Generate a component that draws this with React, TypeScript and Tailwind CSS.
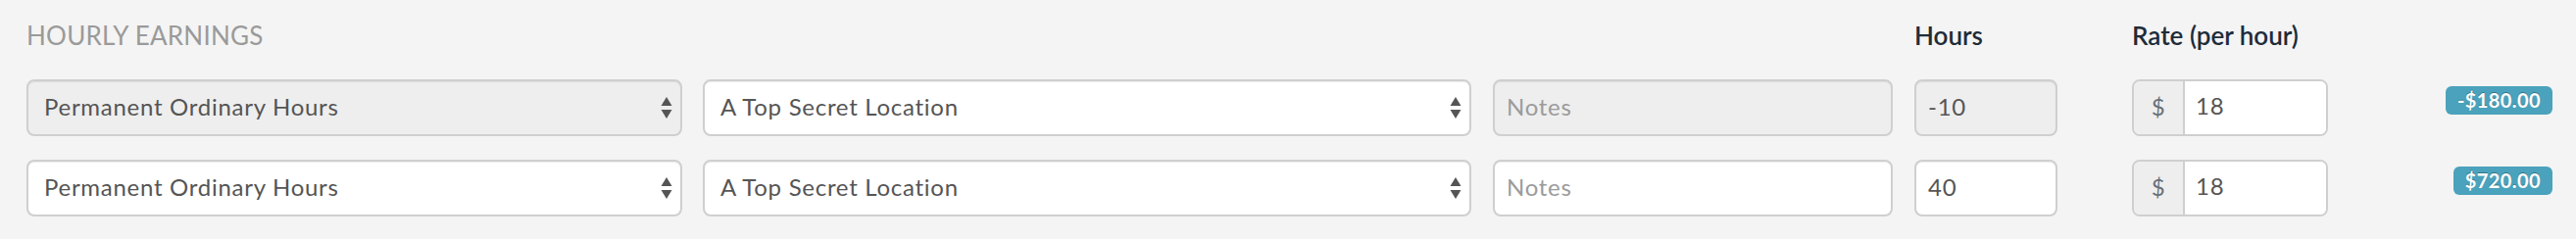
import React from "react";

interface EarningRow {
  type: string;
  location: string;
  hours: string;
  rate: string;
  total: string;
  locked: boolean;
}

const rows: EarningRow[] = [
  { type: "Permanent Ordinary Hours", location: "A Top Secret Location", hours: "-10", rate: "18", total: "-$180.00", locked: true },
  { type: "Permanent Ordinary Hours", location: "A Top Secret Location", hours: "40", rate: "18", total: "$720.00", locked: false },
];

const field =
  "h-[58px] rounded-[8px] border-2 border-[#cfcfcf] shadow-[inset_0_1px_1px_rgba(0,0,0,0.075)] text-[24px] tracking-[0.03em] text-[#555555] outline-none";

function SortArrows() {
  return (
    <svg width="12" height="24" viewBox="0 0 12 24" aria-hidden="true" className="shrink-0">
      <path d="M6 1 L11.5 10 L0.5 10 Z" fill="#555555" />
      <path d="M6 23 L11.5 14 L0.5 14 Z" fill="#555555" />
    </svg>
  );
}

function FakeSelect({ value, locked, className }: { value: string; locked: boolean; className: string }) {
  return (
    <div
      className={`${field} ${className} flex items-center justify-between pl-[16px] pr-[8px] ${
        locked ? "bg-[#eeeeee]" : "bg-white"
      }`}
    >
      <span className="pb-[3px]">{value}</span>
      <SortArrows />
    </div>
  );
}

export default function App() {
  return (
    <div
      className="min-h-[244px] w-[2628px] bg-[#f4f4f4] pl-[27px] pr-[24px] pt-[23px]"
      style={{ fontFamily: "Lato, 'Open Sans', sans-serif" }}
    >
      {/* Kopfzeile */}
      <div className="mb-[32px] flex h-[26px] items-center text-[26px] leading-[26px]">
        <div className="w-[1926px] uppercase tracking-[0.01em] text-[#9a9a9a]">Hourly Earnings</div>
        <div className="w-[146px] font-semibold text-[#1e2c3a]">Hours</div>
        <div className="ml-[76px] font-semibold text-[#1e2c3a]">Rate (per hour)</div>
      </div>

      <div className="flex flex-col gap-[24px]">
        {rows.map((row, i) => (
          <div key={i} className="flex items-start">
            <FakeSelect value={row.type} locked={row.locked} className="w-[669px]" />
            <FakeSelect value={row.location} locked={false} className="ml-[21px] w-[784px]" />
            <input
              placeholder="Notes"
              readOnly
              className={`${field} ml-[22px] w-[408px] px-[12px] pb-[4px] placeholder:text-[#9b9b9b] ${
                row.locked ? "bg-[#eeeeee]" : "bg-white"
              }`}
            />
            <input
              defaultValue={row.hours}
              readOnly
              className={`${field} ml-[22px] w-[146px] px-[12px] pb-[4px] ${row.locked ? "bg-[#eeeeee]" : "bg-white"}`}
            />
            <div className={`${field} ml-[76px] flex w-[200px] overflow-hidden bg-white`}>
              <span className="flex w-[52px] items-center justify-center border-r-2 border-[#cfcfcf] bg-[#eeeeee] pb-[3px] text-[#687079]">
                $
              </span>
              <input
                defaultValue={row.rate}
                readOnly
                className="min-w-0 flex-1 bg-white px-[11px] pb-[4px] text-[24px] tracking-[0.03em] text-[#555555] outline-none"
              />
            </div>
            <span className="ml-auto mt-[7px] flex h-[29px] items-center rounded-[6px] bg-[#4aa2bc] px-[12px] pb-[1px] text-[20px] font-bold leading-none tracking-[0.02em] text-white [text-shadow:0_-1px_0_rgba(0,0,0,0.3)]">
              {row.total}
            </span>
          </div>
        ))}
      </div>
    </div>
  );
}
